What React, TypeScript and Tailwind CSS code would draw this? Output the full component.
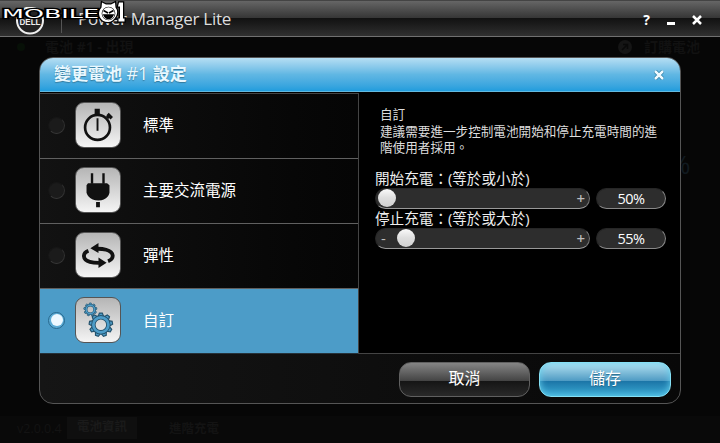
import type { ReactNode } from "react";

const StopwatchIcon = () => (
  <svg viewBox="0 0 46 46" className="h-full w-full" fill="none" stroke="#111">
    <circle cx="22.500" cy="25.500" r="13" strokeWidth="2.8" />
    <path d="M19.500 6h5.4v6h-5.4z" fill="#111" stroke="none" />
    <path d="M32.500 15.500l3-3M33 11.500l4.4 4.4" strokeWidth="3.500" />
    <path d="M22.500 16v13" strokeWidth="2" />
  </svg>
);

const PlugIcon = () => (
  <svg viewBox="0 0 46 46" className="h-full w-full" fill="#111">
    <path d="M15.500 5.500h2.500v11h-2.500zM27.500 5.500h2.500v11h-2.500z" />
    <path d="M12.500 16h20l2.500 2V26q-1 5-6 7-2 1-5.500 1t-6-1q-5-2-6.500-7v-8z" />
    <path d="M21 35.500h4v5.500h-4z" />
  </svg>
);

const CycleIcon = () => (
  <svg viewBox="0 0 46 46" className="h-full w-full" fill="#111">
    <path
      d="M13 18.500C6.500 21 6.500 28 14.500 30.200q3.500 1 9.500 1M33.500 29.500c7-2.800 6.500-9.700-2-12q-3.500-1-9-1"
      fill="none"
      stroke="#111"
      strokeWidth="4"
    />
    <path d="M23.500 10.500v10.500L15 16zM23.500 25.500V36.500l8.500-5.500z" />
  </svg>
);

const Gear = ({ x, y, scale }: { x: number; y: number; scale: number }) => (
  <g transform={`translate(${x} ${y}) scale(${scale})`}>
    {[0, 40, 80, 120, 160, 200, 240, 280, 320].map((angle) => (
      <path
        key={angle}
        d="M-2.800-8.500L-1.500-12h3l1.300 3.500"
        transform={`rotate(${angle})`}
        fill="#4c9cc8"
        stroke="#25536d"
        strokeWidth="1.200"
      />
    ))}
    <circle r="7.700" fill="none" stroke="#25536d" strokeWidth="4.600" />
    <circle r="7.700" fill="none" stroke="#4c9cc8" strokeWidth="2.800" />
  </g>
);

const GearsIcon = () => (
  <svg viewBox="0 0 46 46" className="h-full w-full">
    <Gear x={15} y={12} scale={0.57} />
    <Gear x={26} y={28} scale={1.02} />
  </svg>
);

const modes: { label: string; icon: ReactNode }[] = [
  { label: "標準", icon: <StopwatchIcon /> },
  { label: "主要交流電源", icon: <PlugIcon /> },
  { label: "彈性", icon: <CycleIcon /> },
  { label: "自訂", icon: <GearsIcon /> },
];

const ModeRow = ({
  label,
  icon,
  selected,
}: {
  label: string;
  icon: ReactNode;
  selected: boolean;
}) => (
  <div
    className={`flex h-[65px] items-center border-b pb-0.5 pl-2 ${
      selected
        ? "border-[#26323a] bg-[#4c9cc8]"
        : "border-[#606060] bg-linear-to-r from-[#121212] to-[#050505]"
    }`}
  >
    <div
      className={`flex size-[17px] items-center justify-center rounded-full border ${
        selected
          ? "border-[#28688d] bg-[#5babd5]"
          : "border-[#161616] border-r-[#303030] border-b-[#383838] bg-[#1b1b1b]"
      }`}
    >
      {selected && <div className="size-3 rounded-full bg-[#edf8ff]" />}
    </div>
    <div className="ml-2.5 size-[46px] rounded-[9px] border border-[#555] bg-linear-to-b from-[#b5b5b5] to-[#f5f5f5]">
      {icon}
    </div>
    <span className="ml-[22px] text-[15.500px] leading-5 text-white">
      {label}
    </span>
  </div>
);

const ChargeSlider = ({
  label,
  value,
  left,
  showMinus,
}: {
  label: string;
  value: string;
  left: number;
  showMinus: boolean;
}) => (
  <div className="h-10">
    <div className="h-[19px] text-[14.600px] leading-[19px] whitespace-nowrap text-[#eee]">
      {label}
    </div>
    <div className="flex gap-1.5">
      <div className="relative flex h-[21px] w-[215px] items-center justify-between rounded-full border border-[#262626] border-r-[#777] border-b-[#999] bg-[#2d2d2d] pr-1 pl-[5px] text-[15px] leading-none text-[#bbb]">
        <span>{showMinus ? "-" : ""}</span>
        <span className="font-semibold">+</span>
        <div
          className="absolute top-0 size-[18px] rounded-full bg-linear-to-b from-[#fafafa] via-[#dedede] to-[#d1d1d1]"
          style={{ left }}
        />
      </div>
      <div className="flex h-[21px] w-[70px] items-center justify-center rounded-full border border-[#262626] border-r-[#888] border-b-[#888] bg-[#2d2d2d] font-['Open_Sans'] text-[14.500px] tracking-[-0.6px] text-white">
        {value}
      </div>
    </div>
  </div>
);

const Watermark = () => (
  <svg
    className="absolute -top-px left-0"
    width="128"
    height="26"
    viewBox="0 0 128 26"
    stroke="#000"
    strokeWidth="2.500"
    paintOrder="stroke"
    fill="#fff"
  >
    <text
      x="2"
      y="17.500"
      fontFamily="DejaVu Sans"
      fontSize="13"
      textLength="97"
      lengthAdjust="spacingAndGlyphs"
    >
      MOBILE
    </text>
    <path d="M102 2.500q3 1.500 4 2h5l4-2 .5 5q3 4 .5 9-3.500 5.500-8 5.500-6 0-8.500-5.500-1.500-5 2-9z" />
    <circle cx="108.500" cy="13.500" r="6.200" strokeWidth="1.300" />
    <path
      d="M103.500 10.500l4.500 2.500M113.500 10.500l-4.500 2.500M104 15h9q-1.500 3.500-4.500 3.500T104 15z"
      strokeWidth="1.500"
      fill="#000"
    />
    <path d="M119 2.500h4v16h1.500v3h-6v-3h1.500V6.500h-2z" />
  </svg>
);

const TitleBar = () => (
  <header className="relative h-[37px] border-t border-[#444] bg-linear-to-b from-[#666] via-[#353535] via-48% to-[#353535]">
    <div className="flex h-full items-center border-b border-[#707070] bg-linear-to-b from-transparent from-48% via-[#121212] via-50% to-[#303030] pl-4">
      <svg className="mt-1" width="28" height="28" viewBox="0 0 28 28">
        <circle cx="14" cy="13.500" r="13" fill="#222" stroke="#eee" strokeWidth="2" />
        <text
          x="3.500"
          y="17.500"
          fontFamily="Liberation Sans"
          fontWeight="bold"
          fontSize="9"
          textLength="21"
          lengthAdjust="spacingAndGlyphs"
          fill="#eee"
        >
          DELL
        </text>
      </svg>
      <div className="mt-1 ml-[17px] h-6 w-px bg-[#555]" />
      <h1 className="ml-4 font-['Open_Sans'] text-[17px] leading-6 tracking-[-0.28px] whitespace-nowrap text-[#ddd]">
        Power Manager Lite
      </h1>
      <div className="mt-0.5 mr-[18px] ml-auto flex items-center gap-[17px] font-['Open_Sans'] text-white">
        <span className="text-[14px] font-bold">?</span>
        <span className="mt-2 h-[3px] w-2 bg-white" />
        <svg width="10" height="10" viewBox="0 0 10 10" stroke="#fff" strokeWidth="2.500">
          <path d="M1 1l8 8M9 1L1 9" />
        </svg>
      </div>
    </div>
    <Watermark />
  </header>
);

const Dialog = () => (
  <section className="relative mx-auto h-[347px] w-[642px] overflow-hidden rounded-[14px] border border-[#555] bg-linear-to-r from-[#151515] to-[#080808]">
    <div className="flex h-[34px] items-center justify-between border-b border-[#63b9df] bg-linear-to-b from-[#b5def3] via-[#60b7e3] via-50% to-[#209ddd] pr-4 pl-3.5">
      <h2 className="pb-0.5 text-[17px] leading-6 font-bold text-[#e9f8ff] [text-shadow:0_1px_1px_#347b9e]">
        變更電池 <span className="text-[18px] font-normal">#1</span> 設定
      </h2>
      <svg width="10" height="10" viewBox="0 0 10 10" fill="none">
        <path d="M1 1l8 8M9 1L1 9" stroke="#25799f" strokeWidth="4" />
        <path d="M1 1l8 8M9 1L1 9" stroke="#effaff" strokeWidth="2.500" />
      </svg>
    </div>
    <div className="flex h-[262px] border-b border-[#444] bg-black pt-px">
      <div className="w-[319px] border-t border-r border-[#444]">
        {modes.map((mode, i) => (
          <ModeRow key={mode.label} {...mode} selected={i === 3} />
        ))}
      </div>
      <div className="flex-1 pt-3.5 pl-4">
        <div className="ml-[5px] h-[62px] text-[12.600px] leading-[16.500px] whitespace-nowrap text-[#ddd]">
          <p>自訂</p>
          <p>建議需要進一步控制電池開始和停止充電時間的進</p>
          <p>階使用者採用。</p>
        </div>
        <ChargeSlider label="開始充電：(等於或小於)" value="50%" left={2} showMinus={false} />
        <ChargeSlider label="停止充電：(等於或大於)" value="55%" left={21} showMinus />
      </div>
    </div>
    <div className="flex justify-end gap-[9px] pt-2 pr-[9px]">
      <button className="h-[35px] w-[131px] rounded-[12px] border border-[#606060] pb-[3px] text-[16px] text-white [background-image:linear-gradient(#858585,#454545_53%,#151515_55%,#292929)]">
        取消
      </button>
      <button className="h-[35px] w-[132px] rounded-[12px] border border-[#85e0f5] pb-[3px] text-[16px] text-white [background-image:linear-gradient(#b6e2f2,#509cc4_53%,#1b75a7_55%,#3ba8d3)] [box-shadow:inset_0_0_7px_#65d1ef] [text-shadow:0_1px_1px_#276889]">
        儲存
      </button>
    </div>
  </section>
);

export default function App() {
  return (
    <div className="flex h-[443px] w-[720px] flex-col overflow-hidden bg-[#060606] font-['Open_Sans','Noto_Sans_CJK_TC',sans-serif]">
      <TitleBar />
      <div className="flex h-5 items-end justify-between pr-5 pl-[17px] text-[14px] leading-5 font-bold text-[#111]">
        <span className="flex items-center gap-5">
          <span className="size-2 rounded-full bg-[#071007]" />
          電池 #1 - 出現
        </span>
        <span className="flex items-center gap-3">
          <svg width="14" height="14" viewBox="0 0 14 14" fill="none" stroke="#090909">
            <circle cx="7" cy="7" r="7" fill="#151515" stroke="none" />
            <path d="M4 10l5-5M5 4.500h4.500V9" strokeWidth="1.500" />
          </svg>
          訂購電池
        </span>
      </div>
      <div className="relative">
        {/* battery percentage, half hidden behind the dialog */}
        <span className="absolute top-[94px] left-[669px] text-[26px] leading-none text-[#10191f]">
          %
        </span>
        <Dialog />
      </div>
      <footer className="mt-3 flex h-[27px] items-center bg-[#090909] pl-[17px] text-[12.500px] text-[#131313]">
        <span className="w-[50px]">v2.0.0.4</span>
        <span className="mb-1 flex h-[22px] w-[70px] items-center justify-center bg-[#0f0f0f] font-bold text-[#1a1a1a]">
          電池資訊
        </span>
        <span className="ml-8 font-bold">進階充電</span>
      </footer>
    </div>
  );
}
